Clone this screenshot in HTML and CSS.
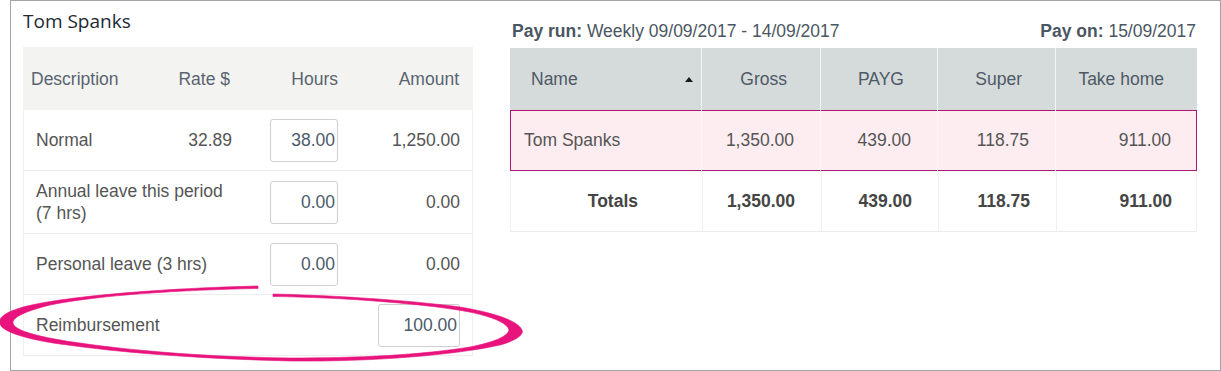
FILE: index.html
```html
<!DOCTYPE html>
<html lang="en">
<head>
<meta charset="utf-8">
<title>Pay run - Tom Spanks</title>
<link rel="stylesheet" href="styles.css">
</head>
<body>
<div class="page">
  <div class="frame">
    <section class="employee">
      <h2 class="title">Tom Spanks</h2>
      <div class="lines">
        <div class="line line-head">
          <div class="c c-desc">Description</div>
          <div class="c c-num">Rate $</div>
          <div class="c c-num">Hours</div>
          <div class="c c-num">Amount</div>
        </div>
        <div class="line">
          <div class="c c-desc">Normal</div>
          <div class="c c-num">32.89</div>
          <div class="c c-num"><input class="field" type="text" value="38.00"></div>
          <div class="c c-num">1,250.00</div>
        </div>
        <div class="line line-tall">
          <div class="c c-desc c-wrap">Annual leave this period (7 hrs)</div>
          <div class="c c-num"><input class="field" type="text" value="0.00"></div>
          <div class="c c-num">0.00</div>
        </div>
        <div class="line">
          <div class="c c-desc c-wide">Personal leave (3 hrs)</div>
          <div class="c c-num"><input class="field" type="text" value="0.00"></div>
          <div class="c c-num">0.00</div>
        </div>
        <div class="line">
          <div class="c c-desc c-wide3">Reimbursement</div>
          <div class="c c-num"><input class="field field-wide" type="text" value="100.00"></div>
        </div>
      </div>
    </section>

    <section class="payrun">
      <div class="payline">
        <div><b>Pay run:</b> Weekly 09/09/2017 - 14/09/2017</div>
        <div><b>Pay on:</b> 15/09/2017</div>
      </div>
      <div class="grid">
        <div class="g-row g-head">
          <div class="g g-name">Name <span class="sort"></span></div>
          <div class="g">Gross</div>
          <div class="g">PAYG</div>
          <div class="g">Super</div>
          <div class="g">Take home</div>
        </div>
        <div class="g-row g-sel">
          <div class="g g-name">Tom Spanks</div>
          <div class="g">1,350.00</div>
          <div class="g">439.00</div>
          <div class="g">118.75</div>
          <div class="g">911.00</div>
        </div>
        <div class="g-row g-total">
          <div class="g g-name">Totals</div>
          <div class="g">1,350.00</div>
          <div class="g">439.00</div>
          <div class="g">118.75</div>
          <div class="g">911.00</div>
        </div>
      </div>
    </section>
  </div>

  <svg class="circle" width="1221" height="371" viewBox="0 0 1221 371" aria-hidden="true">
    <path d="M 258 286
             C 170 288, 60 296, 20 308
             C 4 313, -2 318, 0 324
             C 2 332, 30 340, 60 344
             C 130 354, 210 359, 290 361
             C 380 362, 460 354, 500 345
             C 518 340, 524 334, 522 330
             C 518 320, 490 312, 460 307
             C 400 299, 320 295, 273 294
             L 273 296.5
             C 320 297, 400 301, 458 310
             C 490 315, 508 323, 509 330
             C 508 336, 495 342, 470 347
             C 420 355, 360 358, 290 358
             C 210 357, 130 351, 66 341
             C 30 335, 12 329, 13 322
             C 14 316, 30 310, 50 305
             C 100 295, 180 290, 258 288.5 Z" />
  </svg>
</div>
</body>
</html>
```

FILE: styles.css
```css
* { box-sizing: border-box; }

html, body {
  margin: 0;
  padding: 0;
  background: #ffffff;
}

body {
  font-family: "Liberation Sans", Arial, sans-serif;
  font-size: 17.5px;
  color: #555555;
}

.page {
  position: relative;
  width: 1221px;
  height: 371px;
}

.frame {
  margin-left: 10px;
  width: 1211px;
  height: 371px;
  border: 1px solid #a4a4a4;
  display: flex;
  gap: 37px;
  padding: 0 22px 0 12px;
}

/* ---------- left: employee lines ---------- */
.employee {
  width: 450px;
  flex: none;
}

.title {
  margin: 0;
  height: 46px;
  padding-top: 7px;
  font-family: "Open Sans", "Noto Sans", sans-serif;
  font-weight: 400;
  font-size: 19px;
  line-height: 26px;
  color: #1d2833;
}

.lines {
  width: 450px;
}

.line {
  display: grid;
  grid-template-columns: 125px 97px 106px 122px;
  align-items: center;
  height: 61px;
  border-bottom: 1px solid #ededed;
  border-left: 1px solid #efefef;
  border-right: 1px solid #efefef;
}

.line-tall { height: 63px; }

.line-head {
  height: 63px;
  background: #f3f3f2;
  border: none;
  color: #5a6470;
}

.c {
  padding: 0 14px 0 0;
  line-height: 22px;
}

.c-desc {
  padding-left: 12px;
}

.line-head .c-desc { padding-left: 8px; }

.c-wrap {
  grid-column: span 2;
  padding-right: 12px;
}

.c-wide { grid-column: span 2; }
.c-wide3 { grid-column: span 3; }

.c-num {
  text-align: right;
}

.line-head .c-num:nth-child(3) { padding-right: 13px; }
.line-head .c-num:nth-child(2) { padding-right: 15px; }

.field {
  display: inline-block;
  vertical-align: middle;
  width: 68px;
  height: 43px;
  margin: 0;
  border: 1px solid #cfcfcf;
  border-radius: 3px;
  padding: 0 2px 0 0;
  text-align: right;
  font-family: "Liberation Sans", Arial, sans-serif;
  font-size: 17.5px;
  color: #4c5b6a;
  background: #ffffff;
}

.field-wide {
  width: 82px;
}

/* ---------- right: pay run ---------- */
.payrun {
  width: 687px;
  flex: none;
}

.payline {
  height: 47px;
  padding-top: 20px;
  display: flex;
  justify-content: space-between;
  line-height: 20px;
  color: #4b5663;
  padding-left: 2px;
  padding-right: 1px;
}

.payline b { font-weight: 700; }

.grid { width: 687px; }

.g-row {
  display: grid;
  grid-template-columns: 191px 119px 117px 118px 142px;
  align-items: stretch;
}

.g {
  display: flex;
  align-items: center;
  justify-content: flex-end;
  padding-right: 26px;
}

.g-name {
  justify-content: flex-start;
  padding-left: 14px;
  padding-right: 0;
}

.g-head {
  height: 62px;
  background: #d5dbdb;
  color: #4e5966;
}

.g-head .g { padding-right: 33px; }
.g-head .g + .g { border-left: 1px solid #f4f6f6; }
.g-head .g-name {
  padding-left: 21px;
  padding-right: 0;
  position: relative;
}

.sort {
  position: absolute;
  right: 8px;
  top: 29px;
  width: 0;
  height: 0;
  border-left: 4px solid transparent;
  border-right: 4px solid transparent;
  border-bottom: 5px solid #1a1a1a;
}

.g-sel {
  height: 61px;
  background: #fdedf1;
  box-shadow: inset 0 0 0 1px #ae1870;
}

.g-sel .g + .g { border-left: 1px solid #fbf5f7; }

.g-total {
  height: 61px;
  font-weight: 700;
  color: #454545;
  border-bottom: 1px solid #ececec;
  border-left: 1px solid #f0f0f0;
  border-right: 1px solid #f0f0f0;
}

.g-total .g + .g { border-left: 1px solid #f0f0f0; }

.g-total .g-name {
  justify-content: flex-end;
  padding-right: 64px;
}

/* ---------- hand-drawn highlight ---------- */
.circle {
  position: absolute;
  left: 0;
  top: 0;
  pointer-events: none;
  overflow: visible;
}

.circle path {
  fill: #e8137c;
  stroke: #e8137c;
  stroke-width: 0.6;
}
```
